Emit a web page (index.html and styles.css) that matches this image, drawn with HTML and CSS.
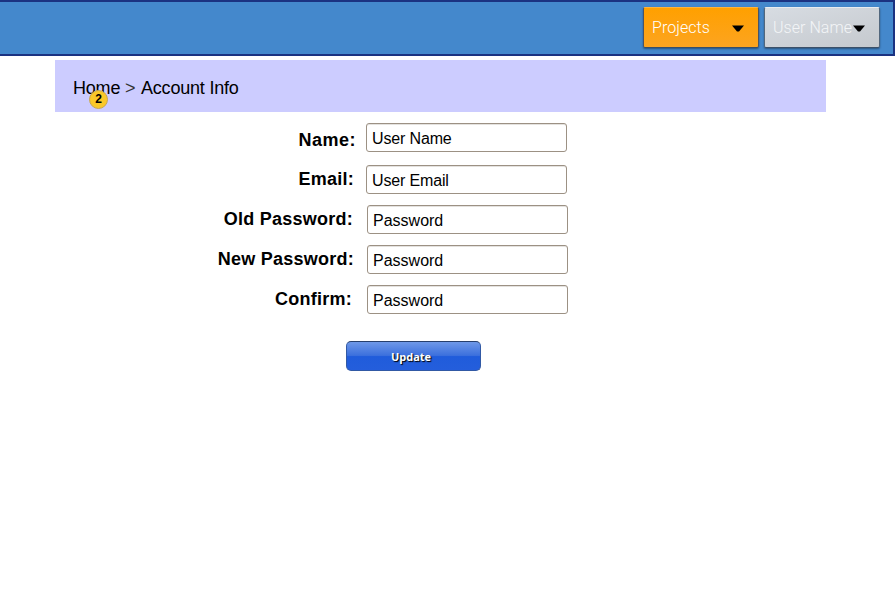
FILE: index.html
```html
<!DOCTYPE html>
<html lang="en">
<head>
<meta charset="utf-8">
<title>Account Info</title>
<link rel="stylesheet" href="styles.css">
</head>
<body>
<header class="topbar">
  <button class="menu menu-projects"><span class="menu-text">Projects</span><svg class="caret" width="12" height="7" viewBox="0 0 12 7"><path d="M0 0.5H12L7 6.5H5Z"/></svg></button>
  <button class="menu menu-user"><span class="menu-text">User Name</span><svg class="caret" width="12" height="7" viewBox="0 0 12 7"><path d="M0 0.5H12L7 6.5H5Z"/></svg></button>
</header>
<nav class="crumbs">
  <span class="home">Home<span class="badge">2</span></span><span class="sep">&gt;</span><span class="current">Account Info</span>
</nav>
<form class="form">
  <div class="row row-name"><label for="name">Name:</label><input id="name" type="text" value="User Name"></div>
  <div class="row row-email"><label for="email">Email:</label><input id="email" type="text" value="User Email"></div>
  <div class="row row-old"><label for="old">Old Password:</label><input id="old" type="text" value="Password"></div>
  <div class="row row-new"><label for="new">New Password:</label><input id="new" type="text" value="Password"></div>
  <div class="row row-confirm"><label for="confirm">Confirm:</label><input id="confirm" type="text" value="Password"></div>
  <button class="update" type="button">Update</button>
</form>
</body>
</html>
```
FILE: styles.css
```css
* { box-sizing: border-box; }
body {
  margin: 0;
  background: #fff;
  color: #000;
  font-family: "Liberation Sans", Arial, sans-serif;
}
.topbar {
  display: flex;
  justify-content: flex-end;
  gap: 5px;
  height: 56px;
  padding: 5px 13px 0 0;
  background: #4488cc;
  border: 2px solid #1b3281;
  border-left: 0;
}
.menu {
  display: flex;
  align-items: center;
  width: 116px;
  height: 41px;
  padding: 0 0 0 8px;
  border: 1px solid;
  border-radius: 2px;
  color: #fff;
  font: 300 16px Roboto, sans-serif;
  letter-spacing: .05px;
  white-space: nowrap;
  box-shadow: 0 1px 2px rgba(0, 0, 0, .4);
}
.menu-projects {
  background: linear-gradient(#ffa000, #fca420);
  border-color: #ffb43a #47546a #384e68 #47546a;
}
.menu-user {
  background: linear-gradient(165deg, #d7dce2, #c5c9ce);
  border-color: #e8ecf0 #52677d #3c5068 #52677d;
}
.menu-text { flex: none; width: 80px; text-align: left; }
.menu-user .menu-text { color: #f3f5f7; }
.caret { flex: none; fill: #000; position: relative; top: 1px; }
.crumbs {
  display: flex;
  align-items: center;
  width: 771px;
  height: 52px;
  margin: 4px 0 0 55px;
  padding: 4px 0 0 18px;
  background: #ccccff;
  font-size: 18px;
  letter-spacing: -.2px;
  white-space: nowrap;
}
.home { position: relative; width: 52px; }
.sep { width: 16px; color: #333; }
.badge {
  position: absolute;
  left: 16px;
  top: 12px;
  width: 19px;
  height: 19px;
  border: 1px solid #c8a850;
  border-radius: 50%;
  background: #fac828;
  font: bold 12px/17px "Liberation Sans", sans-serif;
  text-align: center;
}
.form { padding-top: 11px; }
.row {
  display: flex;
  height: 29px;
  margin-bottom: 11px;
}
.row-name { margin-bottom: 13px; }
.row label {
  width: 367px;
  padding-right: 14px;
  font-size: 18px;
  font-weight: bold;
  letter-spacing: .25px;
  line-height: 29px;
  text-align: right;
  white-space: nowrap;
}
.row-name label { width: 366px; padding-right: 10px; line-height: 35px; letter-spacing: .5px; }
.row-email label { width: 366px; padding-right: 12px; }
.row-new label { padding-right: 13px; }
.row-confirm label { padding-right: 15px; }
.row input {
  width: 201px;
  height: 29px;
  padding: 2px 5px 0;
  border: 1px solid #9c9184;
  border-radius: 3px;
  background: #fff;
  box-shadow: inset 0 1px #e4e2df;
  color: #000;
  font: 16px "Liberation Sans", sans-serif;
  letter-spacing: -.15px;
}
.row-old input, .row-new input, .row-confirm input { letter-spacing: 0; }
.update {
  display: block;
  width: 135px;
  height: 30px;
  margin: 27px 0 0 346px;
  padding: 0 5px 0 0;
  border: 1px solid #3159a5;
  border-top-color: #263f6d;
  border-radius: 5px;
  background: linear-gradient(#6e98e8 0%, #3c70dd 48%, #205cdb 52%, #245edc 100%);
  color: #fff;
  font: bold 11px "Open Sans", sans-serif;
  text-shadow: 1px 1px 1px #000;
}
```
